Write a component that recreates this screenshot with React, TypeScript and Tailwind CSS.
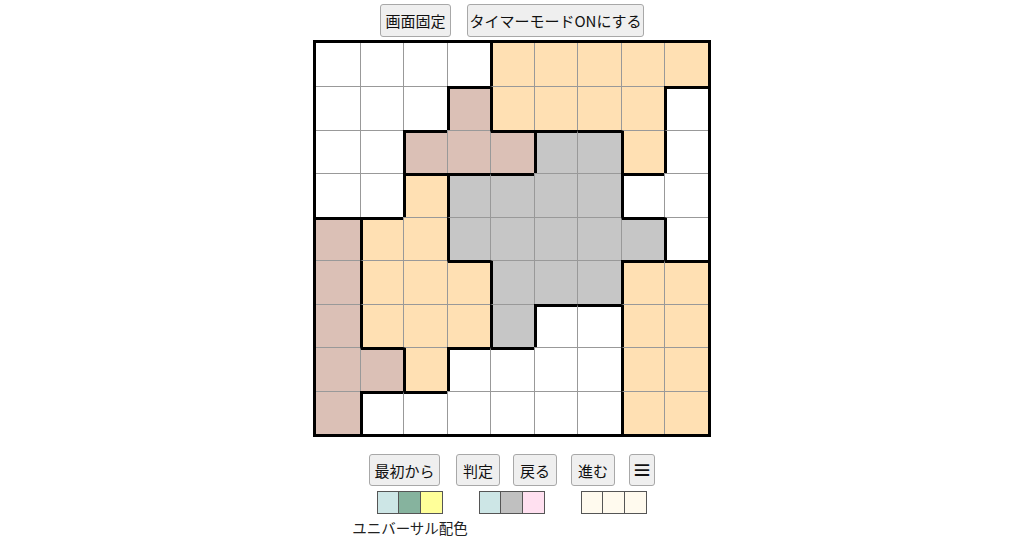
import React from "react";

// 9x9 board: W white, O orange, B brown, G gray
const BOARD = [
  "WWWWOOOOO",
  "WWWBOOOOW",
  "WWBBBGGOW",
  "WWOGGGGWW",
  "BOOGGGGGW",
  "BOOOGGGOO",
  "BOOOGWWOO",
  "BBOWWWWOO",
  "BWWWWWWOO",
];

const FILL: Record<string, string> = {
  W: "bg-white",
  O: "bg-[#ffe0b3]",
  B: "bg-[#dbc0b6]",
  G: "bg-[#c6c6c6]",
};

const FONT = { fontFamily: '"Noto Sans CJK JP", "Noto Sans", sans-serif' };

function Btn({ label, className }: { label: string; className: string }) {
  return (
    <button
      className={
        "flex items-center justify-center rounded-[3px] border border-[#a8a8a8] bg-[#efefef] leading-none text-[#111] " +
        className
      }
    >
      {label}
    </button>
  );
}

function Cell({ r, c }: { r: number; c: number }) {
  const v = BOARD[r][c];
  const top =
    r === 0
      ? ""
      : BOARD[r - 1][c] !== v
      ? "border-t-[3px] border-t-black"
      : "border-t border-t-[#999]";
  const left =
    c === 0
      ? ""
      : BOARD[r][c - 1] !== v
      ? "border-l-[3px] border-l-black"
      : "border-l border-l-[#999]";
  return <div className={FILL[v] + " " + top + " " + left} />;
}

function Swatches({ colors }: { colors: string[] }) {
  return (
    <div className="flex">
      {colors.map((col, i) => (
        <div
          key={i}
          className={
            "h-[23px] w-[22px] border-y border-r border-[#555] " +
            col +
            (i === 0 ? " border-l" : "")
          }
        />
      ))}
    </div>
  );
}

export default function App() {
  return (
    <div className="flex h-[538px] w-full flex-col items-center overflow-hidden bg-white pt-[4px]" style={FONT}>
      <div className="flex gap-4">
        <Btn label="画面固定" className="h-[33px] w-[71px] text-[15px]" />
        <Btn label="タイマーモードONにする" className="h-[33px] w-[177px] text-[15px]" />
      </div>

      <div className="mt-[3px] grid h-[398px] w-[398px] grid-cols-9 grid-rows-9 border-[3px] border-black">
        {BOARD.map((row, r) =>
          row.split("").map((_, c) => <Cell key={r + "-" + c} r={r} c={c} />)
        )}
      </div>

      <div className="mt-[17px] flex">
        <Btn label="最初から" className="h-[32px] w-[71px] text-[15px]" />
        <Btn label="判定" className="ml-[16px] h-[32px] w-[44px] text-[15px]" />
        <Btn label="戻る" className="ml-[13px] h-[32px] w-[44px] text-[15px]" />
        <Btn label="進む" className="ml-[14px] h-[32px] w-[44px] text-[15px]" />
        <Btn label="≡" className="ml-[14px] h-[32px] w-[26px] text-[20px] font-bold" />
      </div>

      <div className="mt-[5px] flex gap-[36px]">
        <div className="flex w-[66px] flex-col items-center">
          <Swatches colors={["bg-[#cde6e6]", "bg-[#86b39e]", "bg-[#ffff99]"]} />
          <div className="mt-[4px] whitespace-nowrap text-[14.5px] leading-[20px] text-[#222]">ユニバーサル配色</div>
        </div>
        <Swatches colors={["bg-[#cde6e6]", "bg-[#c0c0c0]", "bg-[#ffe0f0]"]} />
        <Swatches colors={["bg-[#fffaee]", "bg-[#fffaee]", "bg-[#fffaee]"]} />
      </div>
    </div>
  );
}
